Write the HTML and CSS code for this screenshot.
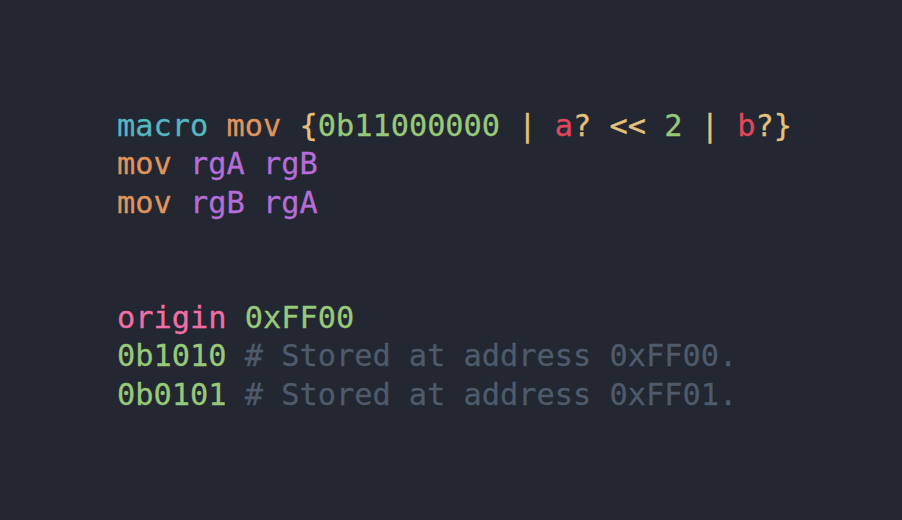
FILE: index.html
```html
<!DOCTYPE html>
<html>
<head>
<meta charset="utf-8">
<link rel="stylesheet" href="styles.css">
</head>
<body>
<pre class="code"><span class="kw">macro</span> <span class="fn">mov</span> <span class="br">{</span><span class="num">0b11000000</span> <span class="op">|</span> <span class="arg">a</span><span class="q">?</span> <span class="op">&lt;&lt;</span> <span class="num">2</span> <span class="op">|</span> <span class="arg">b</span><span class="q">?</span><span class="br">}</span>
<span class="fn">mov</span> <span class="reg">rgA</span> <span class="reg">rgB</span>
<span class="fn">mov</span> <span class="reg">rgB</span> <span class="reg">rgA</span>


<span class="dir">origin</span> <span class="num">0xFF00</span>
<span class="num">0b1010</span> <span class="cm"># Stored at address 0xFF00.</span>
<span class="num">0b0101</span> <span class="cm"># Stored at address 0xFF01.</span></pre>
</body>
</html>
```

FILE: styles.css
```css
html, body {
  margin: 0;
  padding: 0;
  background: #222731;
  height: 100%;
}
.code {
  margin: 0;
  padding: 107px 0 0 117px;
  font-family: "DejaVu Sans Mono", "Liberation Mono", monospace;
  font-size: 30.3px;
  line-height: 38.4px;
  color: #abb2bf;
  -webkit-text-stroke: 0.3px currentColor;
}
.kw { color: #56b6c2; }
.fn { color: #e0955f; }
.br { color: #e5c07b; }
.num { color: #98c879; }
.op { color: #e5c07b; }
.arg { color: #e0475e; }
.q { color: #e5c07b; }
.reg { color: #b56dd8; }
.dir { color: #f26ea5; }
.cm { color: #4f5a6b; }
```
